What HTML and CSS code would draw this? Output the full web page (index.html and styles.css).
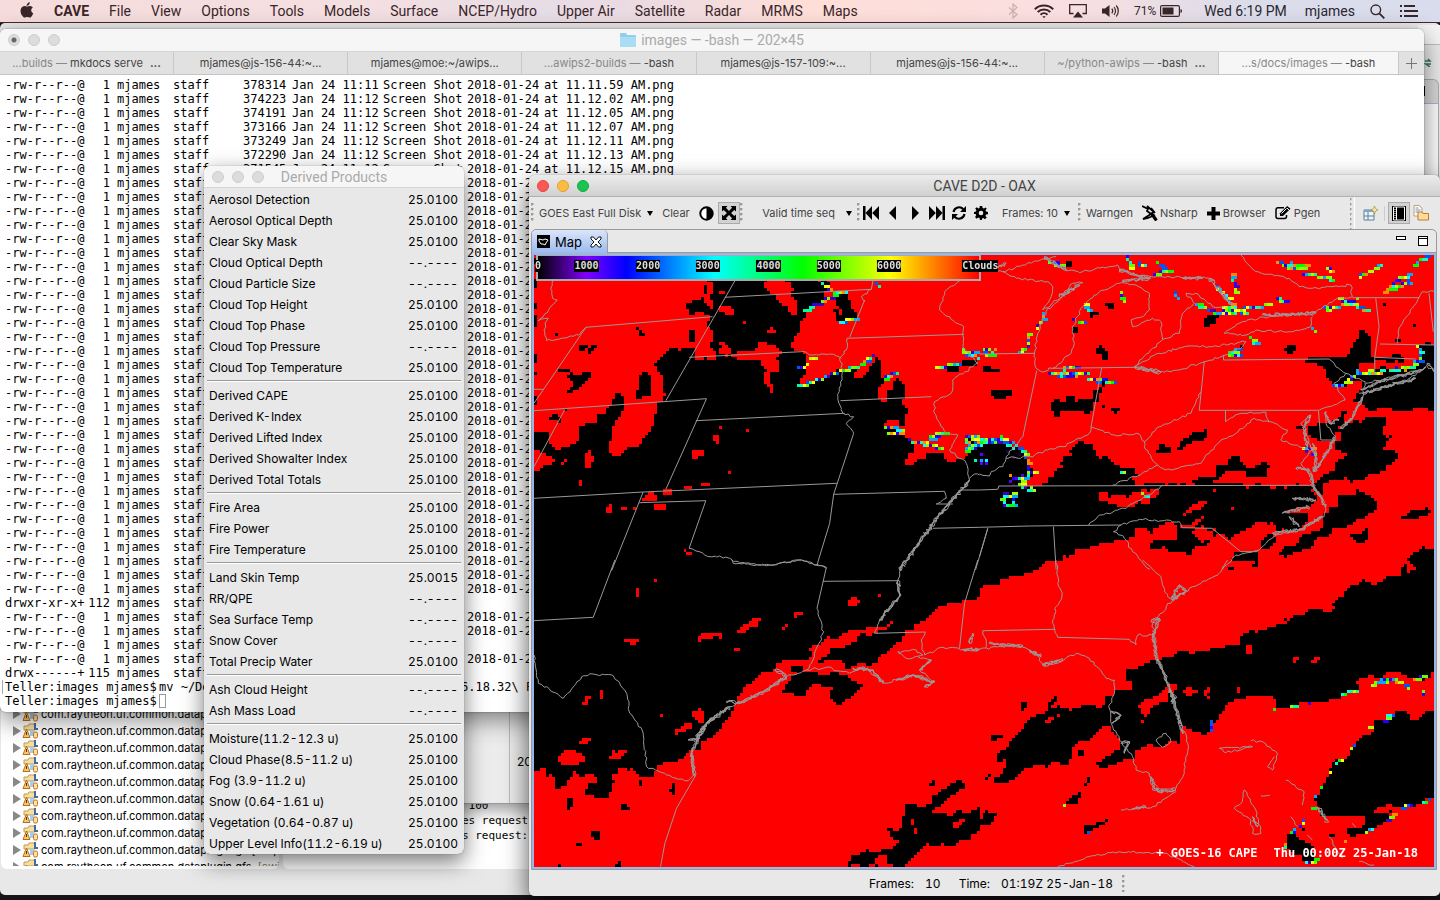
FILE: index.html
```html
<!DOCTYPE html>
<html lang="en">
<head>
<meta charset="utf-8">
<title>CAVE D2D - OAX</title>
<link rel="stylesheet" href="styles.css">
</head>
<body>
<header class="menubar">
  <nav class="menus">
    <button class="menu apple" aria-label="Apple"><svg width="14" height="16" viewBox="0 0 14 16"><path d="M9.8.2c.1 1-.3 1.900-.9 2.600-.6.700-1.500 1.200-2.300 1.100-.1-.9.300-1.900.9-2.500C8.100.7 9.100.2 9.800.2zM12.900 5.500c-1.100.7-1.700 1.600-1.700 2.800 0 1.400.8 2.500 2.100 3-.3.900-.8 1.800-1.400 2.600-.6.800-1.200 1.700-2.200 1.700s-1.300-.6-2.500-.6-1.600.6-2.500.6c-1 0-1.700-.9-2.300-1.800C.6 11.900-.1 8.300 1.300 6c.8-1.300 2-2 3.200-2 1 0 1.900.7 2.600.7.600 0 1.700-.8 3-.7 1.200.1 2.200.6 2.800 1.500z"/></svg></button>
    <button class="menu app">CAVE</button><button class="menu">File</button><button class="menu">View</button><button class="menu">Options</button><button class="menu">Tools</button><button class="menu">Models</button><button class="menu">Surface</button><button class="menu">NCEP/Hydro</button><button class="menu">Upper Air</button><button class="menu">Satellite</button><button class="menu">Radar</button><button class="menu">MRMS</button><button class="menu">Maps</button>
  </nav>
  <div class="extras">
    <svg class="faint" width="11" height="16" viewBox="0 0 11 16"><path d="M1 4.500l8 7-4 3.500V1l4 3.500-8 7" fill="none" stroke="currentColor" stroke-width="1.200"/></svg>
    <svg width="20" height="15" viewBox="0 0 20 15" fill="none" stroke="currentColor" stroke-width="2"><path d="M.8 5.200c5-5 13.400-5 18.400 0M3.700 8c3.500-3.500 9.100-3.500 12.600 0M6.500 10.800c2-2 5-2 7 0"/><path d="M8.300 12.200h3.400L10 14.200z" fill="currentColor" stroke="none"/></svg>
    <svg width="18" height="14" viewBox="0 0 18 14"><path d="M4.500 9.500H.7V.7h16.600v8.800h-3.800" fill="none" stroke="currentColor" stroke-width="1.300"/><path d="M9 7.500l5 6H4z"/></svg>
    <svg width="17" height="14" viewBox="0 0 17 14"><path d="M0 4.500h3l4.500-3.500v12L3 9.500H0z"/><path d="M9.800 4.700c1 1.200 1 3.400 0 4.600M12 3.100c2 2 2 5.800 0 7.800M14.200 1.500c2.800 3 2.800 8 0 11" fill="none" stroke="currentColor" stroke-width="1.200"/></svg>
    <span class="power"><span class="percent">71%</span><svg width="23" height="12" viewBox="0 0 23 12"><rect x=".6" y=".6" width="18.800" height="10.800" rx="1.500" fill="none" stroke="currentColor" stroke-width="1.200"/><path d="M2.500 2.500h11v7h-11zM20.500 4c2 .5 2 3.500 0 4z"/></svg></span>
    <span class="clock">Wed 6:19 PM</span>
    <span class="user">mjames</span>
    <svg width="15" height="15" viewBox="0 0 15 15" fill="none" stroke="currentColor"><circle cx="5.800" cy="5.800" r="4.800" stroke-width="1.400"/><path d="M9.300 9.300l5 5" stroke-width="1.800"/></svg>
    <svg width="18" height="12" viewBox="0 0 18 12"><path d="M0 0h2v2H0zM0 5h2v2H0zM0 10h2v2H0zM4 0h11v2H4zM4 5h14v2H4zM4 10h14v2H4z"/></svg>
  </div>
</header>

<main class="desktop">
  <section class="window ide">
    <div class="ide-body">
      <div class="tree">
        <ul class="packages" id="packages">
          <li><svg class="pkg"><use href="#pkg"/></svg>com.raytheon.uf.common.dataplugin</li>
          <li><svg class="pkg"><use href="#pkg"/></svg>com.raytheon.uf.common.dataplugin</li>
          <li><svg class="pkg"><use href="#pkg"/></svg>com.raytheon.uf.common.dataplugin</li>
          <li><svg class="pkg"><use href="#pkg"/></svg>com.raytheon.uf.common.dataplugin</li>
          <li><svg class="pkg"><use href="#pkg"/></svg>com.raytheon.uf.common.dataplugin</li>
          <li><svg class="pkg"><use href="#pkg"/></svg>com.raytheon.uf.common.dataplugin</li>
          <li><svg class="pkg"><use href="#pkg"/></svg>com.raytheon.uf.common.dataplugin</li>
          <li><svg class="pkg"><use href="#pkg"/></svg>com.raytheon.uf.common.dataplugin</li>
          <li><svg class="pkg"><use href="#pkg"/></svg>com.raytheon.uf.common.dataplugin.ge [awip</li>
          <li><svg class="pkg"><use href="#pkg"/></svg>com.raytheon.uf.common.dataplugin.gfs <span class="dim">[awip</span></li>
        </ul>
      </div>
      <div class="console"><pre> 100
es request
s request:</pre></div>
    </div>
    <svg class="sprite" aria-hidden="true"><symbol id="pkg" viewBox="0 0 25 16"><path d="M0 3l8 5-8 5z" fill="#888"/><path d="M11 3h4l1-2h5l1 2v4H11z" fill="#f5dfa0" stroke="#c39b52"/><path d="M22 0v6h3" fill="none" stroke="#49699f" stroke-width="2"/><path d="M17 7h4v6h-4z" fill="#9fd0f4"/><path d="M13.500 6l3.500 8.500h-7z" fill="#f9c66c" stroke="#b96d1b"/><path d="M13.500 9v3" stroke="#5b3510"/><rect x="20.500" y="9" width="4" height="6" rx="1.500" fill="#ffe29b" stroke="#c9731c"/></symbol></svg>
  </section>

  <section class="window sidepeek"><div class="peek-tools"><svg width="8" height="9" viewBox="0 0 8 9"><path d="M1 3h5l-2-2M7 6H2l4 3" fill="none" stroke="#2d7a5a" stroke-width="1.500"/></svg></div><div class="peek-head"><i></i></div></section>
  <section class="window preview"><span class="preview-main"></span><span class="preview-side">20</span></section>

  <section class="window terminal">
    <div class="titlebar pale"><span class="lights"><i class="dot edited"></i><i class="dot"></i><i class="dot"></i></span>
      <h2><svg width="16" height="14" viewBox="0 0 16 14"><path d="M0 1q0-1 1-1h5l1 2h8q1 0 1 1v10q0 1-1 1H1q-1 0-1-1z" fill="#8fcfe9"/><path d="M0 4h16v9q0 1-1 1H1q-1 0-1-1z" fill="#a9ddf4"/></svg>images — -bash — 202×45</h2></div>
    <div class="tabs">
      <button class="tab"><span><span class="path">...builds —</span> mkdocs serve</span><b>...</b></button>
      <button class="tab">mjames@js-156-44:~...</button>
      <button class="tab">mjames@moe:~/awips...</button>
      <button class="tab"><span><span class="path">...awips2-builds —</span> -bash</span></button>
      <button class="tab">mjames@js-157-109:~...</button>
      <button class="tab">mjames@js-156-44:~...</button>
      <button class="tab"><span><span class="path">~/python-awips —</span> -bash</span><b>...</b></button>
      <button class="tab current"><span><span class="path">...s/docs/images —</span> -bash</span></button>
      <button class="tab add" aria-label="New tab"><svg width="11" height="11" viewBox="0 0 11 11"><path d="M5.500 0v11M0 5.500h11" stroke="#777"/></svg></button>
    </div>
    <div class="shell">
      <div class="listing">
<pre class="mode">-rw-r--r--@
-rw-r--r--@
-rw-r--r--@
-rw-r--r--@
-rw-r--r--@
-rw-r--r--@
-rw-r--r--@
-rw-r--r--@
-rw-r--r--@
-rw-r--r--@
-rw-r--r--@
-rw-r--r--@
-rw-r--r--@
-rw-r--r--@
-rw-r--r--@
-rw-r--r--@
-rw-r--r--@
-rw-r--r--@
-rw-r--r--@
-rw-r--r--@
-rw-r--r--@
-rw-r--r--@
-rw-r--r--@
-rw-r--r--@
-rw-r--r--@
-rw-r--r--@
-rw-r--r--@
-rw-r--r--@
-rw-r--r--@
-rw-r--r--@
-rw-r--r--@
-rw-r--r--@
-rw-r--r--@
-rw-r--r--@
-rw-r--r--@
-rw-r--r--@
-rw-r--r--@
drwxr-xr-x+
-rw-r--r--@
-rw-r--r--@
-rw-r--r--@
-rw-r--r--@
drwx------+</pre>
<pre class="links">1
1
1
1
1
1
1
1
1
1
1
1
1
1
1
1
1
1
1
1
1
1
1
1
1
1
1
1
1
1
1
1
1
1
1
1
1
112
1
1
1
1
115</pre>
<pre class="owner">mjames
mjames
mjames
mjames
mjames
mjames
mjames
mjames
mjames
mjames
mjames
mjames
mjames
mjames
mjames
mjames
mjames
mjames
mjames
mjames
mjames
mjames
mjames
mjames
mjames
mjames
mjames
mjames
mjames
mjames
mjames
mjames
mjames
mjames
mjames
mjames
mjames
mjames
mjames
mjames
mjames
mjames
mjames</pre>
<pre class="staff">staff
staff
staff
staff
staff
staff
staff
staff
staff
staff
staff
staff
staff
staff
staff
staff
staff
staff
staff
staff
staff
staff
staff
staff
staff
staff
staff
staff
staff
staff
staff
staff
staff
staff
staff
staff
staff
staff
staff
staff
staff
staff
staff</pre>
<pre class="size">378314
374223
374191
373166
373249
372290
371545</pre>
<pre class="date">Jan 24 11:11
Jan 24 11:12
Jan 24 11:12
Jan 24 11:12
Jan 24 11:12
Jan 24 11:12
Jan 24 11:12</pre>
<pre class="label">Screen Shot
Screen Shot
Screen Shot
Screen Shot
Screen Shot
Screen Shot
Screen Shot</pre>
<pre class="day">2018-01-24
2018-01-24
2018-01-24
2018-01-24
2018-01-24
2018-01-24
2018-01-24
2018-01-24
2018-01-24
2018-01-24
2018-01-24
2018-01-24
2018-01-24
2018-01-24
2018-01-24
2018-01-24
2018-01-24
2018-01-24
2018-01-24
2018-01-24
2018-01-24
2018-01-24
2018-01-24
2018-01-24
2018-01-24
2018-01-24
2018-01-24
2018-01-24
2018-01-24
2018-01-24
2018-01-24
2018-01-24
2018-01-24
2018-01-24
2018-01-24
2018-01-24
2018-01-24

2018-01-24
2018-01-24

2018-01-24</pre>
<pre class="time">at 11.11.59 AM.png
at 11.12.02 AM.png
at 11.12.05 AM.png
at 11.12.07 AM.png
at 11.12.11 AM.png
at 11.12.13 AM.png
at 11.12.15 AM.png</pre>
      </div>
      <div class="prompt marked"><span class="ps">Teller:images mjames$</span><span class="cmd">mv ~/Desktop</span><span class="tail">6.18.32\ PM.png</span></div>
      <div class="prompt"><span class="ps">Teller:images mjames$</span><i class="cursor"></i></div>
    </div>
  </section>

  <section class="window products">
    <div class="titlebar pale"><span class="lights"><i class="dot"></i><i class="dot"></i><i class="dot"></i></span><h2>Derived Products</h2></div>
    <div class="items">
      <button><span>Aerosol Detection</span><span>25.0100</span></button>
      <button><span>Aerosol Optical Depth</span><span>25.0100</span></button>
      <button><span>Clear Sky Mask</span><span>25.0100</span></button>
      <button><span>Cloud Optical Depth</span><span>--.----</span></button>
      <button><span>Cloud Particle Size</span><span>--.----</span></button>
      <button><span>Cloud Top Height</span><span>25.0100</span></button>
      <button><span>Cloud Top Phase</span><span>25.0100</span></button>
      <button><span>Cloud Top Pressure</span><span>--.----</span></button>
      <button><span>Cloud Top Temperature</span><span>25.0100</span></button>
      <hr>
      <button><span>Derived CAPE</span><span>25.0100</span></button>
      <button><span>Derived K-Index</span><span>25.0100</span></button>
      <button><span>Derived Lifted Index</span><span>25.0100</span></button>
      <button><span>Derived Showalter Index</span><span>25.0100</span></button>
      <button><span>Derived Total Totals</span><span>25.0100</span></button>
      <hr>
      <button><span>Fire Area</span><span>25.0100</span></button>
      <button><span>Fire Power</span><span>25.0100</span></button>
      <button><span>Fire Temperature</span><span>25.0100</span></button>
      <hr>
      <button><span>Land Skin Temp</span><span>25.0015</span></button>
      <button><span>RR/QPE</span><span>--.----</span></button>
      <button><span>Sea Surface Temp</span><span>--.----</span></button>
      <button><span>Snow Cover</span><span>--.----</span></button>
      <button><span>Total Precip Water</span><span>25.0100</span></button>
      <hr>
      <button><span>Ash Cloud Height</span><span>--.----</span></button>
      <button><span>Ash Mass Load</span><span>--.----</span></button>
      <hr>
      <button><span>Moisture(11.2-12.3 u)</span><span>25.0100</span></button>
      <button><span>Cloud Phase(8.5-11.2 u)</span><span>25.0100</span></button>
      <button><span>Fog (3.9-11.2 u)</span><span>25.0100</span></button>
      <button><span>Snow (0.64-1.61 u)</span><span>25.0100</span></button>
      <button><span>Vegetation (0.64-0.87 u)</span><span>25.0100</span></button>
      <button><span>Upper Level Info(11.2-6.19 u)</span><span>25.0100</span></button>
    </div>
  </section>

  <section class="window cave">
    <div class="titlebar"><span class="lights"><i class="dot red"></i><i class="dot amber"></i><i class="dot green"></i></span><h1>CAVE D2D - OAX</h1></div>
    <div class="toolbar">
      <div class="group g1"><button>GOES East Full Disk<i class="caret"></i></button><button>Clear</button>
        <button aria-label="Contrast"><svg width="15" height="15" viewBox="0 0 15 15"><circle cx="7.500" cy="7.500" r="6.200" fill="#fff" stroke="#000" stroke-width="2"/><path d="M7.500 1a6.500 6.500 0 010 13z"/></svg></button>
        <button class="pressed" aria-label="Expand"><svg width="14" height="14" viewBox="0 0 14 14"><path d="M0 0h5.500L3.900 1.700 7 4.900l3.100-3.200L8.500 0H14v5.500l-1.700-1.600L9.100 7l3.200 3.100L14 8.500V14H8.500l1.600-1.700L7 9.100l-3.100 3.200L5.500 14H0V8.500l1.700 1.600L4.900 7 1.700 3.900 0 5.500z"/></svg></button></div>
      <div class="group g2"><button>Valid time seq<i class="caret far"></i></button></div>
      <div class="group g3">
        <button aria-label="First frame"><svg width="16" height="14" viewBox="0 0 16 14"><path d="M0 0h2.500v14H0zM9 0v14L2.500 7zM16 0v14L9.200 7z"/></svg></button>
        <button aria-label="Previous frame"><svg width="16" height="14" viewBox="0 0 16 14"><path d="M11 0v14L4 7z"/></svg></button>
        <button aria-label="Next frame"><svg width="16" height="14" viewBox="0 0 16 14"><path d="M5 0v14l7-7z"/></svg></button>
        <button aria-label="Last frame"><svg width="16" height="14" viewBox="0 0 16 14"><path d="M13.500 0H16v14h-2.500zM7 0v14l6.500-7zM0 0v14l6.800-7z"/></svg></button>
        <button aria-label="Loop"><svg width="16" height="14" viewBox="-1 0 16 14"><path d="M1.500 6C2.500 1 8.500-.2 11.300 3.300M12.500 8c-1 5-7 6.200-9.800 2.700" fill="none" stroke="#000" stroke-width="2.200"/><path d="M14 0v6H8zM0 14V8h6z"/></svg></button>
        <button aria-label="Settings"><svg width="16" height="14" viewBox="-1 0 16 14"><path fill-rule="evenodd" d="M5.800 0h2.400l.4 2 1.300.6L11.600 1.400l1 1 .2.200-1.300 1.700.6 1.300 1.900.3v2.300l-2 .4-.5 1.300 1.200 1.700-1.700 1.700-1.700-1.200-1.200.5L7.900 14H6l-.5-2-1.200-.5-1.700 1.200-1.500-1.700 1.100-1.700-.5-1.200L0 7.900V6l1.900-.4.5-1.300L1.200 2.600l1.600-1.400 1.600 1.200L5.500 2zM7 4.700a2.300 2.300 0 100 4.600 2.300 2.300 0 000-4.600z"/></svg></button>
        <button class="frames">Frames: 10<i class="caret"></i></button></div>
      <div class="group g4"><button>Warngen</button>
        <button class="tight"><svg width="16" height="16" viewBox="0 0 16 16" fill="none" stroke="#000" stroke-width="1.800"><path d="M0 1l6 3-1 2 4 3-8 5 5-1 7-3M5 1l7 6-2 1 5 7M9 3l4 5M9 9l5 7"/></svg>Nsharp</button>
        <button><svg width="13" height="13" viewBox="0 0 13 13"><path d="M4.500 0h4v4.500H13v4H8.500V13h-4V8.500H0v-4h4.500z"/></svg>Browser</button>
        <button><svg width="16" height="14" viewBox="0 0 16 14"><path d="M9 1.800H3Q1 1.800 1 4v6.500q0 2 2 2h6.500q2 0 2-2V9" fill="none" stroke="#000" stroke-width="1.500"/><path d="M5 10V7.200L12.200 0 15.500 2.800 8 10z"/><path d="M6.500 7.500l5-5M12 2l2 2" stroke="#fff"/></svg>Pgen</button></div>
      <div class="perspectives">
        <button aria-label="Open perspective"><svg width="15" height="15" viewBox="0 0 15 15"><path d="M1 4h10v10H1z" fill="#eef5fa" stroke="#5a8093"/><path d="M1 4h9v2H1z" fill="#74a9cf"/><path d="M5 6v8M1 10h10" stroke="#5a8093"/><path d="M11.500 0l1 2.500L15 4l-2.500 1-1 3-1-3L8 4l2.500-1.500z" fill="#ffe9a8" stroke="#b8913f" stroke-width=".8"/></svg></button>
        <button class="pressed" aria-label="D2D"><svg width="14" height="15" viewBox="0 0 14 15"><rect width="14" height="15" /><path d="M1.500 1h11v13h-11z" fill="none" stroke="#fff"/><path d="M4.500 1v13" stroke="#fff"/><path d="M3 3v10" stroke="#fff" stroke-dasharray="1 1"/></svg></button>
        <button aria-label="Localization"><svg width="16" height="16" viewBox="0 0 16 16"><path d="M1 .5h5L9 3v8H1z" fill="#fff" stroke="#b9a276"/><path d="M2.500 3h3M2.500 5h5M2.500 7h3" stroke="#7890b5"/><path d="M5 7h4l1 1.500h5.500V15H5z" fill="#ffdb9c" stroke="#bd7b2c"/></svg></button>
      </div>
    </div>
    <div class="editor">
      <div class="editor-tabs"><div class="editor-tab"><svg width="13" height="13" viewBox="0 0 13 13"><rect width="13" height="13"/><path d="M2 4l4 1 2-1 3 1-2 3-1 2-2-1-2 0-2-3z" fill="none" stroke="#fff"/></svg>Map<button aria-label="Close Map"><svg width="12" height="12" viewBox="0 0 12 12"><path d="M1 1h2.500L6 4l2.500-3H11v2L8 6l3 3v2H8.500L6 8l-2.500 3H1V9l3-3-3-3z" fill="#fff" stroke="#111"/></svg></button></div>
        <div class="view-tools"><button aria-label="Minimize"><svg width="10" height="4" viewBox="0 0 10 4"><rect x=".5" y=".5" width="9" height="3" fill="#fff" stroke="#000"/></svg></button><button aria-label="Maximize"><svg width="10" height="10" viewBox="0 0 10 10"><rect x=".5" y=".5" width="9" height="9" fill="#fff" stroke="#000"/><path d="M0 2.500h10" stroke="#000"/></svg></button></div></div>
      <div class="map">
        <canvas id="field" width="301" height="204"></canvas>
        <svg id="borders" viewBox="0 0 901 612" preserveAspectRatio="none" aria-hidden="true"></svg>
        <div class="scale"><span style="left:0%">0</span><span style="left:11%">1000</span><span style="left:25%">2000</span><span style="left:38.500%">3000</span><span style="left:52.300%">4000</span><span style="left:66%">5000</span><span style="left:79.700%">6000</span><span style="left:100.400%">Clouds</span></div>
        <p class="caption"><span>+ GOES-16 CAPE</span><span>Thu 00:00Z 25-Jan-18</span></p>
      </div>
    </div>
    <footer class="status"><span>Frames:</span><span>10</span><span class="when">Time:</span><span>01:19Z 25-Jan-18</span></footer>
  </section>
</main>
<script src="map.js"></script>
</body>
</html>
```

FILE: styles.css
```css
* { box-sizing: border-box; }
body { margin: 0; height: 100vh; overflow: hidden; display: flex; flex-direction: column; background: #1c1316; font-family: Inter, "Liberation Sans", sans-serif; font-size: 12px; color: #000; }
button { font: inherit; color: inherit; background: none; border: 0; padding: 0; margin: 0; display: flex; align-items: center; white-space: nowrap; }
h1, h2, p, ul, pre { margin: 0; padding: 0; font: inherit; }
svg { display: block; flex: none; }
.sprite { display: none; }

.menubar { height: 23px; flex: none; display: flex; justify-content: space-between; align-items: center; padding: 0 22px 0 20px; border-bottom: 1px solid #48252d; color: #3a2529; fill: currentColor; font-size: 14px; background: linear-gradient(90deg, #f6dcdc 0, #f4dfe1 25%, #e7dde6 38%, #ecdbe1 45%, #ffded8 56%, #fadfe0 74%, #dcddea 86%, #d8dcec 100%); }
.menus, .extras { display: flex; align-items: center; }
.menus { gap: 20px; font-family: Roboto, sans-serif; }
.apple { margin-bottom: 2px; }
.app { font-weight: 700; }
.extras { gap: 15px; font-family: Roboto, sans-serif; }
.power { display: flex; align-items: center; gap: 4px; }
.percent { font-size: 12px; }
.clock { margin-left: 6px; color: #2b2630; }
.user { margin-left: 3px; color: #2b2630; }
.faint { opacity: .25; }

.desktop { position: relative; flex: 1; }
.window { position: absolute; overflow: hidden; }
.titlebar { position: relative; display: flex; align-items: center; flex: none; height: 22px; padding: 0 8px; background: linear-gradient(#ececec, #d0d0d0); border-bottom: 1px solid #b0b0b0; font-family: Roboto, sans-serif; font-size: 14px; color: #444; }
.titlebar h1, .titlebar h2 { flex: 1; display: flex; justify-content: center; align-items: center; gap: 5px; margin-right: 52px; }
.titlebar.pale { background: #f6f6f6; border-color: #d4d4d4; color: #aaa; }
.lights { display: flex; gap: 8px; width: 52px; flex: none; }
.dot { width: 12px; height: 12px; border-radius: 50%; background: #dcdcdc; border: 1px solid #cdcdcd; }
.edited { background: radial-gradient(#666 0 2px, #dcdcdc 3px); }
.red { background: #fc5753; border-color: #df4744; }
.amber { background: #fdbc40; border-color: #dea033; }
.green { background: #19c550; border-color: #14a83f; }

.ide { inset: 0 0 5px 0; background: #e8e8e8; border-radius: 5px; display: flex; flex-direction: column; justify-content: flex-end; }
.ide-body { height: 188px; margin-bottom: 26px; display: grid; grid-template-columns: 278px 1fr; gap: 4px; padding-left: 1px; }
.tree, .console { background: #fff; border-radius: 0 0 6px 6px; overflow: hidden; }
.tree { padding-bottom: 3px; }
.packages { list-style: none; height: 100%; overflow: hidden; padding: 24px 0 0 12px; }
.packages li { display: flex; align-items: center; height: 17px; gap: 3px; font-size: 11px; white-space: pre; }
.pkg { width: 25px; height: 16px; }
.dim { color: #8a7a55; }
.console pre { padding: 117px 0 0 179px; font: 11px/15px "DejaVu Sans Mono", monospace; }
.sidepeek { top: 2px; right: 0; width: 22px; height: 160px; background: #e8e8e8; }
.peek-tools { height: 54px; padding: 33px 0 0 6px; background: linear-gradient(#f4f4f4 19px, #bbb 19px 20px, #e8e8e8 20px); }
.peek-head { height: 106px; margin-right: 1px; border: 1px solid #aaa; border-left: 0; border-radius: 0 6px 0 0; background: linear-gradient(#d5d5d5 23px, #a8b4cc 23px 24px, #fafafa 24px); padding: 6px 0 0 6px; }
.peek-head i { display: block; width: 1px; height: 10px; background: #000; }
.preview { left: 280px; top: 680px; width: 262px; height: 101px; background: #ececec; border-bottom: 1px solid #999; box-shadow: 0 6px 16px #0006; display: flex; align-items: center; }
.preview-main { width: 230px; height: 100%; border-right: 1px solid #bbb; }
.preview-side { padding: 16px 0 0 7px; }

.terminal { left: 0; top: 6px; right: 16px; height: 683px; background: #fff; border-radius: 6px; box-shadow: 0 0 2px #0006, 0 8px 24px #0007; display: flex; flex-direction: column; }
.terminal .titlebar { height: 23px; }
.tabs { display: flex; height: 23px; flex: none; background: #e1e1e1; border-bottom: 1px solid #c5c5c5; font-size: 11px; color: #444; }
.tab { flex: 174 1 0; justify-content: center; gap: 7px; border-right: 1px solid #c8c8c8; overflow: hidden; }
.tab.current { flex-grow: 180; background: #f6f6f6; }
.tab.add { flex: 0 0 25px; border-right: 0; }
.path { color: #888; }
.shell { padding: 3px 0 0 5px; font: 12px/14px "DejaVu Sans Mono", "Liberation Mono", monospace; overflow: hidden; flex: 1; }
.listing { display: grid; grid-template-columns: 77px 28px 7px 56px 70px 49px 91px 84px 77px 1fr; height: 602px; }
.listing pre { white-space: pre; }
.links { text-align: right; }
.owner { grid-column: 4; }
.size { text-align: right; padding-right: 6px; }
.prompt { display: flex; height: 14px; white-space: pre; }
.ps { width: 154px; }
.cmd { width: 302px; }
.cursor { width: 7px; height: 14px; border: 1px solid #999; }
.marked { border-left: 1px solid #aaa; margin-left: -3px; padding-left: 2px; }

.products { left: 204px; top: 143px; width: 260px; background: #e8e8e8; border-radius: 6px; box-shadow: 0 0 1px #0008, 0 8px 22px #0008; }
.items { padding: 1px 3px 0; font-variant-numeric: tabular-nums; }
.items button { width: 100%; height: 21px; justify-content: space-between; padding: 0 3px 0 2px; }
.items hr { height: 2px; margin: 2px 0 3px; border: 0; border-top: 1px solid #999; border-bottom: 1px solid #fff; }

.cave { left: 529px; top: 152px; right: 0; bottom: 4px; background: #e8e8e8; border-radius: 6px 6px 5px 5px; box-shadow: 0 0 1px #000a, 0 10px 26px #000a; display: flex; flex-direction: column; }
.cave .titlebar h1 { margin-right: 52px; }
.toolbar { display: flex; align-items: center; height: 32px; flex: none; padding-left: 2px; color: #444; font-size: 11px; }
.group { display: flex; align-items: center; height: 20px; padding-left: 8px; flex: none; background: radial-gradient(circle at 1px 1px, #999 1px, transparent 2px) 0 0 / 3px 5px repeat-y; }
.g1 { width: 209px; gap: 9px; }
.g1 .pressed { margin-left: -5px; }
.g2 { width: 117px; justify-content: flex-end; padding-right: 5px; }
.g3 { width: 221px; gap: 6px; padding-left: 6px; }
.frames { margin-left: 7px; }
.g4 { width: 272px; gap: 9px; }
.toolbar button { gap: 3px; }
.toolbar .tight { gap: 2px; }
.caret { border: 3px solid transparent; border-top: 5px solid #000; border-bottom: 0; margin-left: 3px; }
.caret.far { margin-left: 8px; }
.toolbar .pressed { flex: none; width: 22px; height: 22px; justify-content: center; background: #d2d2d2; border: 1px solid #aaa; }
.perspectives { flex: 1; align-self: stretch; display: flex; align-items: center; justify-content: flex-end; gap: 3px; padding-right: 11px; background: linear-gradient(#fff, #fff) 4px 0 / 1px 100% no-repeat, radial-gradient(circle at 1px 1px, #999 1px, transparent 2px) -1px 6px / 3px 5px repeat-y; }
.perspectives button:first-child { border-right: 1px solid #ccc; padding-right: 6px; }
.editor { flex: 1; min-height: 0; margin: 0 3px 0 2px; display: flex; flex-direction: column; border: 1px solid #999; border-radius: 5px 5px 0 0; }
.editor-tabs { display: flex; justify-content: space-between; height: 23px; flex: none; border-bottom: 1px solid #999; }
.editor-tab { display: flex; align-items: center; gap: 5px; width: 76px; padding-left: 5px; font-size: 13px; background: linear-gradient(#dbe6fa, #9abaf0); border-right: 1px solid #999; border-radius: 5px 5px 0 0; margin-bottom: -1px; }
.editor-tab button { margin-left: 3px; }
.view-tools { display: flex; gap: 12px; align-items: center; padding-right: 8px; }
.view-tools button:first-child { margin-bottom: 6px; }
.map { position: relative; flex: 1; min-height: 0; border: 2px solid #99b6e8; overflow: hidden; background: #f00; }
#field, #borders { position: absolute; inset: 0; width: 100%; height: 100%; }
#field { image-rendering: pixelated; }
.scale { position: absolute; left: 2px; top: 0; width: 49.400%; height: 26px; border: 2px solid #aaa; border-top-width: 1px; background: linear-gradient(90deg, #000, #8000ff 11%, #00f 20%, #0ff 40%, #0f0 60%, #ff0 80%, #f00); font: bold 10px/12px "DejaVu Sans Mono", monospace; color: #ddd; }
.scale span { position: absolute; top: 4px; background: #000; transform: translateX(-50%); }
.caption { position: absolute; right: 16px; bottom: 7px; display: flex; gap: 16px; font: bold 12px/14px "DejaVu Sans Mono", monospace; color: #fff; white-space: pre; }
.status { height: 26px; flex: none; display: flex; align-items: center; justify-content: center; gap: 11px; padding: 1px 0 0 25px; font-variant-numeric: tabular-nums; }
.status .when { margin-left: 7px; }
.status::after { content: ""; width: 3px; height: 17px; margin-left: -2px; background: radial-gradient(circle at 1px 1px, #999 1px, transparent 2px) 0 0 / 3px 5px repeat-y; }
```

FILE: map.js
```js
// Tile origins in cells: each tile holds its shapes in ninths of a cell.
const tiles = {
  A: { o: [-1.333, -1.667], clip: [0, 0, 149, 102], base: '#000' },
  B: { o: [148.667, -1.667], clip: [149, 0, 152, 102], base: '#f00' },
  C: { o: [-1.333, 101.667], clip: [0, 102, 149, 102], base: '#000' },
  D: { o: [148.667, 101.667], clip: [149, 102, 152, 102], base: '#f00' }
};
let seed = 7;
const rnd = () => (seed = (seed * 16807) % 2147483647) / 2147483647;
const parse = s => s.trim().split(/\s+/).map(p => p.split(',').map(Number));

function roughen(pts, step, amp, closed) {
  const out = [], n = closed ? pts.length : pts.length - 1;
  for (let i = 0; i < n; i++) {
    const a = pts[i], b = pts[(i + 1) % pts.length];
    const k = Math.max(1, Math.round(Math.hypot(b[0] - a[0], b[1] - a[1]) / step));
    for (let j = 0; j < k; j++) {
      const t = j / k, m = j ? amp : 0;
      out.push([a[0] + (b[0] - a[0]) * t + (rnd() - .5) * m, a[1] + (b[1] - a[1]) * t + (rnd() - .5) * m]);
    }
  }
  if (!closed) out.push(pts[pts.length - 1]);
  return out;
}

// "r" red area, "k" black area; drawn in order.
const areas = {
A: `r 12,15 525,15 525,140 500,150 465,170 480,185 530,190 545,205 530,215 550,240 550,265 545,290 560,310 560,335 500,335 490,290 440,295 415,290 410,310 385,325 375,345 380,365 405,380 405,430 380,460 375,520 360,545 320,590 280,610 240,612 232,575 250,550 245,530 270,495 280,460 285,440 265,425 250,455 230,485 200,490 195,520 165,530 150,555 145,570 115,595 65,590 55,570 60,550 35,545 12,545
k 345,365 355,370 358,440 312,440 330,400
k 135,370 188,368 185,385 160,400 150,418 92,430 125,410 125,395 112,385
k 312,232 345,258 330,258
k 140,290 175,278 165,300 145,300
k 170,300 190,285 210,285 180,312
k 480,240 500,240 500,275 485,275
k 60,252 90,252 88,262 60,262
k 80,355 120,352 125,365 85,365
k 60,500 95,500 95,520 60,520
k 100,470 118,475 110,485
r 530,90 550,130 550,175 530,170
r 655,93 785,93 785,130 800,150 808,190 780,190 770,165 750,160 740,135 720,130 710,110 680,105
r 875,15 1400,15 1400,565 1320,560 1310,600 1300,628 1255,640 1240,612 1200,605 1185,645 1172,645 1175,615 1150,655 1128,640 1135,615 1155,605 1150,580 1130,560 1130,500 1135,480 1125,440 1125,400 1100,385 1090,415 1070,455 1050,450 1060,400 1060,350 1040,320 1020,350 1000,375 970,388 975,355 935,360 900,378 810,405 835,355 840,320 820,305 792,300 800,260 815,240 825,205 840,180 885,150
k 870,93 910,95 905,125 880,125
k 925,130 962,130 970,165 988,200 960,215 945,200 940,180 925,170
k 912,180 930,178 935,195 960,200 950,212 915,208
k 1255,340 1345,335 1340,350 1290,358 1255,365
r 690,270 740,290 765,312 740,330 745,365 720,380 735,408 720,432 712,400 700,395 700,350 690,330 620,320 640,308 680,300
r 565,280 595,282 610,310 570,310
r 565,165 590,165 615,200 595,198
r 570,120 588,120 588,130 570,130
r 585,310 640,308 640,318 585,318
r 640,210 655,210 655,220 640,220
r 715,235 740,235 735,250 715,250
r 1068,520 1085,510 1105,512 1120,530 1070,535
r 12,600 35,605 50,620 68,622 60,650 40,645 30,665 12,660
r 165,655 170,612 182,600 190,632 178,655
r 88,640 105,625 110,640
r 145,688 153,688 153,712 145,712
r 335,758 345,735 380,732 385,755
r 275,770 320,770 320,780 275,780
r 228,772 245,762 245,788 230,788
r 368,762 410,762 410,780 368,780
r 395,722 415,712 430,722 430,730 395,730
r 460,708 485,708 485,720 460,720
r 515,697 550,697 550,704 515,704
r 487,603 523,603 523,618 504,620 504,628 487,628
r 553,558 568,558 568,582 562,582 553,574
r 645,548 660,538 660,546 650,556
r 598,660 606,660 606,669 598,669
r 571,528 580,528 580,537 571,537
r 450,873 459,873 459,882 450,882
r 460,900 485,905 485,916 460,908`,
B: `k -20,590 60,572 120,590 150,640 165,680 130,700 135,720 180,705 205,700 230,660 250,635 300,578 320,578 350,605 365,625 400,630 430,660 465,650 470,700 630,705 700,680 720,700 905,706 1005,702 1020,745 930,780 900,815 860,820 800,840 760,872 700,850 720,835 640,840 660,870 700,870 640,915 570,895 520,900 540,870 600,850 590,820 560,820 520,855 490,835 440,875 350,885 290,910 160,960 -20,960
k 755,625 790,618 800,650 850,640 875,640 872,690 830,680 800,665 760,660 710,690 630,708 640,695 700,680
k 575,595 650,545 685,540 690,555 640,585 580,605 535,612 538,578
r 360,730 385,725 380,755 360,750
r 405,735 460,728 540,712 520,745 450,775 390,765
r 605,795 640,770 690,755 640,785
r 600,830 690,800 660,820
r 690,745 720,710 705,745
r 760,770 770,770 770,779 760,779
r 810,780 825,765 825,773
r 885,710 895,710 895,720 885,720
k 1085,540 1130,510 1225,502 1225,610 1245,640 1185,670 1120,695 1080,690 1050,700 1040,735 1005,710 1035,680 1075,655 1080,632 1110,610 1075,600
k 1225,600 1270,615 1250,640 1225,640
k 1235,550 1245,550 1240,570 1230,570
k 1025,800 1060,770 1100,740 1160,725 1190,750 1195,785 1130,820 1110,832 1060,850 1000,895 930,922 888,922 930,892 1000,852 1040,825
k 890,815 960,790 1010,800 960,840 890,835
k 1050,325 1110,320 1130,280 1150,240 1180,270 1180,315 1240,328 1242,308 1280,325 1330,330 1330,282 1400,282 1400,482 1170,478 1130,450 1150,420 1160,400 1120,400 1080,410 1050,385 1050,360 1030,350 980,338
r 1150,332 1325,332 1305,358 1240,358 1150,366 1145,320
k 920,295 960,288 960,305 925,305
k 950,528 1000,530 1025,518 1085,510 1100,480 1115,490 1080,545 1070,570 1025,570 1000,560 985,530
k 230,445 340,445 340,480 245,482 245,498 228,498 222,475
k 375,465 430,465 430,485 405,490 376,478
k 35,420 105,418 105,435 70,450 40,440
k 10,345 78,350 50,368 15,368
k 355,290 380,290 380,350 372,350 370,315
k 385,160 412,150 412,175 385,172
k 330,180 375,185 335,210
k 283,232 300,232 300,250 283,250
k 265,36 286,36 286,50 265,50
k 685,195 725,195 690,235 672,230
k 745,308 795,283 790,300 755,312
k 345,420 375,390 400,400 355,465
k 1120,860 1185,830 1175,860 1155,878
k 1270,808 1345,770 1365,785 1310,812
k 1285,960 1310,905 1400,895 1400,960
k 770,908 835,908 800,930 735,955 770,925
k 820,925 850,900 835,955 820,950
k 850,875 890,855 880,890 850,890
k 1200,170 1225,155 1215,170
k 1310,222 1320,222 1320,232 1310,232
k 1260,262 1272,262 1270,278 1255,278`,
C: `r 0,648 45,620 50,648 70,645 75,690 110,680 130,630 155,648 190,645 200,650 240,690 262,640 270,620 305,625 330,650 370,650 380,625 430,605 480,575 520,560 520,540 570,512 610,455 620,420 640,385 690,350 740,315 830,305 850,290 840,265 900,230 1000,215 1080,190 1105,172 1080,205 1020,225 950,250 900,270 870,310 940,305 950,335 1020,315 1050,290 1100,250 1150,210 1210,160 1300,120 1400,72 1400,940 0,940
k 790,345 900,340 950,345 970,362 1010,375 980,400 940,432 915,430 910,375 840,380 825,412 756,402 765,372
k 785,318 820,318 815,335 785,335
k 510,560 530,535 575,500 600,460 540,500 505,540
k 165,700 175,670 225,670 245,690 235,715 200,712
k 110,710 125,710 118,748 105,745
k 275,735 298,738 295,750 275,748
k 180,805 215,815 205,842 190,838
k 420,690 440,668 435,700 425,712
k 325,655 335,655 335,675 328,675
k 135,850 162,845 140,862
k 215,800 225,800 225,808 215,808
k 250,918 270,900 270,920
k 50,918 95,910 90,920
k 328,808 336,808 336,816 328,816
k 940,808 948,808 948,816 940,816
k 1125,732 1200,735 1240,680 1300,657 1305,685 1260,710 1210,755 1305,760 1400,745 1400,800 1300,840 1260,862 1200,850 1170,870 1120,918 950,920 990,880 1060,870 1110,840 1070,805 1120,800
k 1190,680 1225,658 1215,680
r 1145,775 1170,820 1155,825
r 1265,800 1310,772 1335,800 1300,790 1275,805
r 1170,870 1200,850 1190,875
r 1030,905 1070,880 1080,895 1055,918
r 500,250 530,215 550,218 585,222 580,238 525,240
r 612,228 660,185 680,175 697,178 690,190 650,218
r 745,210 775,185 782,190 755,210
r 792,160 818,150 818,165 795,172
r 870,158 905,155 895,172
r 958,110 968,120 995,122 990,130 960,135
r 282,235 325,240 325,248 285,246
r 318,82 329,82 329,106 318,106
r 366,54 384,54 384,62 366,62
r 615,267 633,267 633,276 615,276
r 423,530 440,500 485,482 475,512 440,522
r 495,455 530,455 530,490 495,512
r 145,440 180,402 186,408 170,435
r 80,605 115,568 165,600 160,605
r 145,552 160,530 180,532 178,555
r 238,600 250,565 290,566 270,595
r 80,535 100,505 90,530
r 250,372 256,372 254,385
r 255,420 280,402 262,422
r 540,338 560,325 550,340
r 450,405 465,388 460,402
r 392,462 400,462 400,470 392,470
r 1262,30 1280,42 1268,40
r 1050,100 1058,100 1058,108 1050,108
r 208,415 225,390 215,425`,
D: `k -20,-20 240,-20 170,35 100,50 -20,95
k 530,300 690,272 790,250 810,215 870,205 930,190 960,160 1080,125 1150,70 1260,48 1315,-20 1400,-20 1400,310 1365,310 1365,358 1335,365 1270,335 1150,350 1140,395 1060,420 890,445 880,405 780,415 740,450 700,500 690,522 610,508 610,530 540,560 470,570 462,600 390,620 355,610 430,560 420,530 395,500 350,520 275,560 270,612 160,625 90,662 20,660 80,622 90,600 52,600 60,575 130,510 180,460 240,438 280,450 385,435 410,385 460,380 445,345 490,315
r 1300,-20 1320,30 1285,30
r 800,255 835,250 820,280 802,278
r 998,305 1022,278 1010,308
r 945,293 967,295 955,308
r 480,440 570,375 600,370 565,425 540,430 500,470
r 615,390 665,388 655,400 615,398
r 682,385 698,385 698,415 682,415
r 775,370 790,370 790,400 775,400
r 480,495 505,480 485,500
r 190,495 250,460 220,490
k 445,345 470,330 470,355 445,360
k 125,445 152,428 135,450
k 25,542 85,512 75,530
k 205,432 255,402 225,440
k 300,570 320,565 315,590 300,590
k 330,650 365,622 340,660 322,685 308,680
k 255,730 310,698 305,728
k 315,795 350,790 400,762 385,790 340,820 318,818
k 0,780 25,735 30,760 60,755 30,800 0,810
k 1260,448 1300,478 1340,460 1400,450 1400,718 1250,745 1200,740 1190,765 1110,770 1030,768 1012,722 1060,630 1130,560 1190,500
k 1190,765 1250,745 1240,762 1160,822 1120,832 1108,812 1160,798
k 940,818 1010,860 1025,905 985,908 935,870
k 1030,832 1075,820 1070,835
k 900,180 935,165 930,185 905,188
k 1100,90 1116,90 1112,105 1098,98
k 740,30 790,0 790,20 765,25
k 820,20 835,0 838,22
r 1025,150 1080,140 1060,155
k 970,800 990,810 980,815`
};

// Scattered low-CAPE cells along these paths.
const specks = {
A: '880,105 920,130 950,128|830,180 880,155 915,140|935,218 975,208|805,410 880,385 940,360 975,355 1035,318|1065,388 1105,370|1068,378 1100,375|840,328 865,325|810,355 835,345|1065,530 1120,540|1075,548 1115,550|1145,572 1190,578 1245,548|1190,585 1240,597|1300,303 1340,310|1310,312 1345,322|1220,355 1290,340|1310,562 1350,560|1310,572 1350,574|1310,582 1350,582|1310,600 1350,590|1340,630 1370,635|1045,105 1047,108|1200,560 1225,555',
B: '-15,578 60,566 110,582 145,618 155,665 175,672|-15,585 60,575 105,592|10,570 80,565|95,680 130,690 130,715 170,718|120,700 150,680|75,735 105,735 108,765 75,768 75,735|210,375 330,375|240,368 310,368|255,360 295,350|245,383 290,380|330,385 410,400|18,302 50,302|15,312 50,316|125,308 150,290 155,255|180,235 197,195|215,35 250,50|450,20 460,60|480,40 500,45|540,40 560,60|530,70 570,68|765,70 775,125|720,110 760,160|735,170 770,172|735,180 770,182|735,188 770,188|655,165 720,190|790,180 870,165|790,190 810,195|900,145 925,155|900,42 990,45|930,52 985,56|980,70 1070,90|1050,55 1070,65|1225,125 1270,80 1295,80|1240,115 1300,100|1290,75 1300,105|1310,45 1345,20|1150,80 1215,45|1050,180 1140,150|1090,150 1170,185|1045,170 1080,175|750,310 790,298|750,318 790,315|820,265 835,285|1150,367 1215,365|1240,358 1300,355 1330,325 1325,290|1070,410 1110,402 1140,365|980,598 1005,600 1003,615|428,130 435,155|320,160 335,185|430,665 440,670|497,735 515,738|1010,235 1015,245|285,208 290,210|305,215 318,217|590,130 600,145|0,628 20,632',
D: '885,447 887,448|940,438 962,438|1000,430 1001,431|1100,402 1140,392|1190,380 1215,355 1250,360 1295,382|1215,370 1235,370|1315,355 1340,350|1340,390 1343,402|1240,465 1220,487|1175,505 1185,505|1120,568 1130,558|1080,606 1092,598|1063,634 1064,635|1035,682 1036,683|1017,710 1018,711|1010,745 1011,746|1230,782 1250,765|1275,745 1300,735|1340,728 1360,722|943,820 950,810|925,857 926,858|980,785 970,795|702,485 703,515|258,735 259,736|333,820 334,821|1165,820 1185,808|990,903 1018,903|1102,846 1103,847'
};
const palette = ['#20f', '#05f', '#0af', '#0ff', '#0f9', '#0f0', '#6f0', '#af0', '#ff0', '#ff8c00', '#4000c0', '#8f0', '#0fc'];

const canvas = document.getElementById('field');
const ctx = canvas.getContext('2d');
for (const [id, t] of Object.entries(tiles)) {
  ctx.save();
  ctx.beginPath(); ctx.rect(...t.clip); ctx.clip();
  ctx.fillStyle = t.base; ctx.fillRect(...t.clip);
  for (const line of areas[id].split('\n')) {
    ctx.fillStyle = line[0] === 'r' ? '#f00' : '#000';
    ctx.beginPath();
    for (const [x, y] of roughen(parse(line.slice(2)), 18, 24, true)) ctx.lineTo(x / 9 + t.o[0], y / 9 + t.o[1]);
    ctx.fill();
  }
  ctx.restore();
}
const img = ctx.getImageData(0, 0, 301, 204);
for (let i = 0; i < img.data.length; i += 4) img.data[i] = img.data[i] > 127 ? 255 : 0;
ctx.putImageData(img, 0, 0);
for (const [id, list] of Object.entries(specks)) {
  const [ox, oy] = tiles[id].o;
  for (const chain of list.split('|')) {
    const cells = roughen(parse(chain), 7, 4, false);
    for (const [x, y] of cells) {
      ctx.fillStyle = palette[Math.floor(rnd() * palette.length)];
      const wide = cells.length > 4 && rnd() < .35 ? 2 : 1;
      ctx.fillRect(Math.floor(x / 9 + ox), Math.floor(y / 9 + oy), wide, 1);
    }
  }
}
// Deep-blue cells inside the Kentucky cluster.
for (const [x, y] of [[149, 66], [150, 66], [148, 68], [149, 69], [150, 68], [151, 69], [158, 65], [160, 67], [162, 66], [161, 74], [163, 73], [160, 76], [159, 75], [162, 75]]) {
  ctx.fillStyle = x % 2 ? '#50f' : '#20003a';
  ctx.fillRect(x, y, 1, 1);
}

// State borders are straight; rivers and coasts get a jagged line; shores are dense.
const lines = {
A: { s: '12,460 168,232 548,200|615,93 408,452|12,482 530,446 408,718|585,142 1025,118|1030,93 1025,118|1005,150 960,262|952,265 1303,253|478,322 815,305|498,512 945,490|932,452 1205,440|12,418 38,418|105,478 12,650|12,745 340,726 922,700|340,726 245,962|328,758 528,752 478,895|972,550 912,733 900,820 862,945|912,733 1245,724|1220,762 1270,762|1295,720 1350,720|1210,835 1350,832|1375,835 1338,960',
  j: '68,93 62,115 68,145 82,150 25,212 55,205 42,240 50,272 145,255 168,232|1025,118 995,140 1005,155|815,305 850,315 900,312 935,325|952,265 950,300 930,325 940,360 925,440 940,490 972,500 950,520 972,550|478,895 525,915 600,925 610,940 720,945 815,930 890,955|1290,93 1245,125 1230,180 1303,230 1300,290 1345,340 1270,390 1265,430 1215,455 1215,490 1250,550 1285,555 1260,600 1310,640 1320,690 1295,720 1225,800 1160,890 1110,962|1350,675 1335,672 1320,685|1245,724 1250,745 1220,762',
  d: '1320,690 1295,720 1225,800 1160,890 1110,960' },
B: { s: '0,312 165,310|220,355 370,353 465,352|172,362 130,560|367,353 335,530|675,335 660,481 1018,481 1025,570 1072,570|733,315 733,330 1050,327|1190,145 1200,230 1187,322 1187,375|1120,143 1320,143|1187,322 1310,327|1203,282 1365,285|1350,130 1363,245|739,481 739,515|0,720 55,718 58,708 995,706|0,832 150,828 425,825|608,833 698,835 785,905 835,905|222,830 230,958|25,835 0,920',
  j: '230,20 130,45 70,65 45,60|70,65 110,85 205,95 220,110 215,140 190,180 240,145 280,100 310,98 250,140 200,185 175,250 165,310 170,355 185,365 220,355 270,315 285,280 278,230 310,170 360,125 420,100 470,105 510,130 510,180 490,200 455,210 460,230 520,205 545,215 550,268 600,250 610,190 645,160 620,130 650,130 700,170 735,170|215,40 260,62 310,65 415,45 420,60 470,75 640,85 690,85 740,150 755,165|785,15 830,65 930,85 960,110 1000,115 1115,105 1120,140 1075,145 1010,185 870,200 790,215 735,250 800,255 830,240 930,245 995,230 1000,200|550,268 520,295 465,352 490,335 540,310 615,290 700,290 800,275 790,290 740,315 675,335 600,360 530,370 465,352|130,560 115,580 80,620 70,650 35,665 30,678 0,672|335,530 330,550 250,590 205,600 150,620 80,625|335,530 405,555 480,552 495,575 540,530 635,490 665,425|1050,327 1070,350 1100,370 1065,400 1098,450 1020,480|1320,143 1260,235 1255,280|1320,143 1330,125 1365,125|1100,370 1158,395 1150,450 1120,505 1085,535|739,515 785,490 860,487 870,515 925,540 905,570 960,590 990,600|870,515 825,505 770,550 725,570 690,610 665,640 560,660 535,645 495,590 495,575|535,645 470,680 400,705|550,705 510,735 440,775 360,795 328,825|425,825 480,808 600,815 608,833|425,825 402,845 435,865 460,905 512,958|995,495 965,520 985,560 1000,600 965,640 1000,680 1005,710 1040,775 1035,800 960,840 890,855 840,900 770,915 730,958|1040,485 1045,530 1070,560 1050,600 1010,660|1160,400 1220,385 1330,360 1280,395 1165,425 1140,430',
  d: '45,60 80,40|195,20 260,60|240,140 300,105|430,95 515,85|420,60 470,75 510,85|610,85 670,85|690,85 760,165|850,195 1010,190|465,352 545,365|1145,420 1200,395 1330,360 1340,350|1150,430 1310,385|1345,340 1365,365|1150,440 1120,505 1085,535|995,495 975,530 985,590|1000,580 1010,620 1005,665|1065,560 1050,600 1005,665|950,655 990,660 1000,700 1040,770|940,745 1010,750|910,790 990,770|1030,800 960,840 880,850|930,800 960,830|1040,485 1050,520 1080,510' },
C: { s: '255,0 190,172 12,182|495,650 440,745 405,850 392,920|880,64 1105,62|1035,220 1187,216|1345,0 1305,130 1290,265|890,22 862,145',
  j: '12,285 25,370 100,415 155,350 190,342 250,347 290,400 300,460 340,520 350,620 410,645 475,662 495,640|490,640 485,570 530,490 600,440 700,395 770,350 830,330 890,322 960,340 1000,320 1040,350 1070,370 1110,355 1150,345 1180,360 1215,365 1170,330 1205,300 1165,290|1105,275 1150,268 1180,285 1130,295 1105,275|1185,285 1240,262 1300,268 1350,268|605,0 665,15 720,15 815,0 890,22|862,145 882,215 850,300 830,330|1125,0 1105,60 1110,110 1050,180 1035,220|1187,216 1175,240 1185,285',
  d: '495,650 485,575 530,490 600,440|495,540 530,490 560,465|475,540 500,540|590,425 630,430 700,395 770,350|735,330 770,345|970,325 1030,330 1060,370|1100,360 1150,345 1215,365 1185,380|1170,330 1205,300|1105,60 1110,110 1050,180|1320,250 1330,220|1300,270 1350,268' },
D: { s: '10,212 228,208|235,232 450,238',
  j: '230,0 235,70 248,105 230,140 220,190 235,232|450,238 470,255 475,225 520,225|10,212 20,240 20,262|0,268 110,255 170,275 190,315 230,310 290,280 330,295 380,355 405,360 405,400 388,440 400,500 430,555 460,590 470,630 510,640 520,690 590,685 615,640 625,550 600,470 570,380 535,300 520,190 580,120 640,80 720,40 745,0|490,0 540,45 565,110 580,120|590,695 520,740 425,750|530,540 560,520 575,545 550,562 530,540|235,920 330,890 420,875 560,880 645,920|720,565 740,578 820,560 720,565|815,542 850,545 895,580 880,630 865,620 885,590|795,690 830,750 845,820 820,820 815,780 765,745 785,730 795,690|920,660 975,695 970,735|845,707 872,706|1010,740 1050,785 1035,785|1050,830 1090,895|985,825 1000,840|935,770 955,800|1140,905 1185,915|1120,790 1130,800',
  d: '575,115 600,75 620,95 580,120|515,185 540,175 520,225|520,220 530,290 570,380 610,520|570,385 590,415 575,425|30,250 60,255 130,258|150,270 185,290|190,315 250,300|395,455 425,465 400,490|425,550 450,545 435,580|515,650 535,695 590,690|460,748 500,738|1015,740 1045,780|820,770 835,800' }
};
const svg = document.getElementById('borders');
for (const [id, sets] of Object.entries(lines)) {
  const [ox, oy] = tiles[id].o;
  for (const [kind, list] of Object.entries(sets)) {
    let d = '';
    for (const chain of list.split('|')) for (let pass = 0; pass < (kind === 'd' ? 3 : 1); pass++) {
      const pts = kind === 's' ? parse(chain) : roughen(parse(chain), kind === 'd' ? 6 : 9, kind === 'd' ? 12 : 7, false);
      d += 'M' + pts.map(([x, y]) => (x / 3 + ox * 3).toFixed(1) + ' ' + (y / 3 + oy * 3).toFixed(1)).join('L');
    }
    const p = document.createElementNS('http://www.w3.org/2000/svg', 'path');
    p.setAttribute('d', d);
    p.setAttribute('fill', 'none');
    p.setAttribute('stroke', '#999');
    p.setAttribute('shape-rendering', 'crispEdges');
    svg.appendChild(p);
  }
}
```
